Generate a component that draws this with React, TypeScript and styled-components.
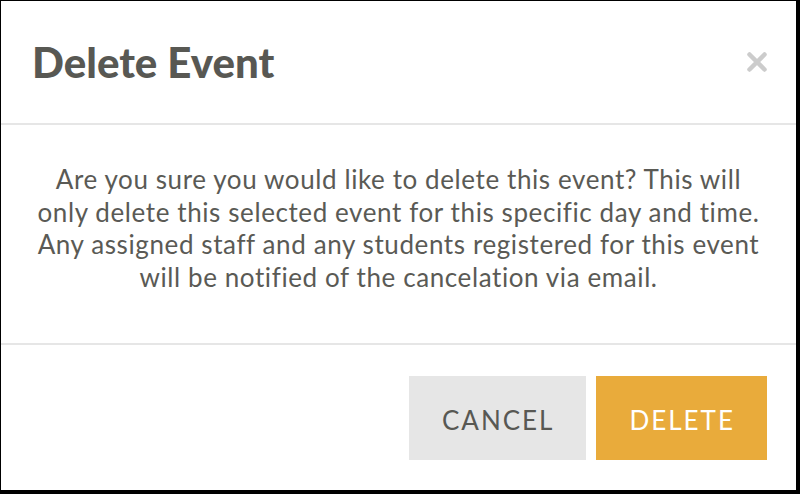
import React from "react";
import styled, { createGlobalStyle } from "styled-components";

const GlobalStyle = createGlobalStyle`
  html, body {
    margin: 0;
    padding: 0;
    background: #000;
  }
  body {
    font-family: Lato, "Liberation Sans", sans-serif;
  }
`;

const Frame = styled.div`
  width: 800px;
  height: 494px;
  box-sizing: border-box;
  border-style: solid;
  border-color: #000;
  border-width: 1px 4px 4px 1px;
  background: #fff;
  display: flex;
  flex-direction: column;
`;

const Header = styled.div`
  height: 122px;
  display: flex;
  align-items: center;
  justify-content: space-between;
  padding: 0 28px 0 31px;
  border-bottom: 2px solid #e6e6e6;
`;

const Title = styled.h2`
  margin: 0;
  font-size: 42px;
  font-weight: 900;
  color: #585853;
`;

const Close = styled.button`
  border: none;
  background: none;
  padding: 0;
  width: 22px;
  height: 22px;
  cursor: pointer;
  display: flex;

  & > svg {
    width: 22px;
    height: 22px;
  }
`;

const Body = styled.div`
  height: 220px;
  box-sizing: border-box;
  display: flex;
  align-items: center;
  justify-content: center;
  padding: 0 10px 12px;
  border-bottom: 2px solid #e6e6e6;
`;

const Message = styled.p`
  margin: 0;
  text-align: center;
  font-size: 26px;
  line-height: 32.5px;
  letter-spacing: 0.6px;
  color: #5a5a55;
`;

const Footer = styled.div`
  flex: 1;
  display: flex;
  justify-content: flex-end;
  align-items: center;
  gap: 10px;
  padding: 0 29px;
`;

const Button = styled.button<{ primary?: boolean }>`
  height: 84px;
  padding: 5px 32px 0 33px;
  border: none;
  border-radius: 0;
  font-family: Lato, "Liberation Sans", sans-serif;
  font-size: 26px;
  font-weight: 400;
  letter-spacing: 2px;
  text-transform: uppercase;
  cursor: pointer;
  background: ${(p) => (p.primary ? "#e9ab3b" : "#e6e6e6")};
  color: ${(p) => (p.primary ? "#fff" : "#585853")};
`;

export default function App() {
  return (
    <>
      <GlobalStyle />
      <Frame>
        <Header>
          <Title>Delete Event</Title>
          <Close type="button" aria-label="Close">
            <svg viewBox="0 0 22 22" fill="none">
              <path
                d="M3.5 3.5L18.5 18.5M18.5 3.5L3.5 18.5"
                stroke="#cccccc"
                strokeWidth="4.5"
                strokeLinecap="round"
              />
            </svg>
          </Close>
        </Header>
        <Body>
          <Message>
            Are you sure you would like to delete this event? This will
            <br />
            only delete this selected event for this specific day and time.
            <br />
            Any assigned staff and any students registered for this event
            <br />
            will be notified of the cancelation via email.
          </Message>
        </Body>
        <Footer>
          <Button type="button">Cancel</Button>
          <Button type="button" primary>
            Delete
          </Button>
        </Footer>
      </Frame>
    </>
  );
}
